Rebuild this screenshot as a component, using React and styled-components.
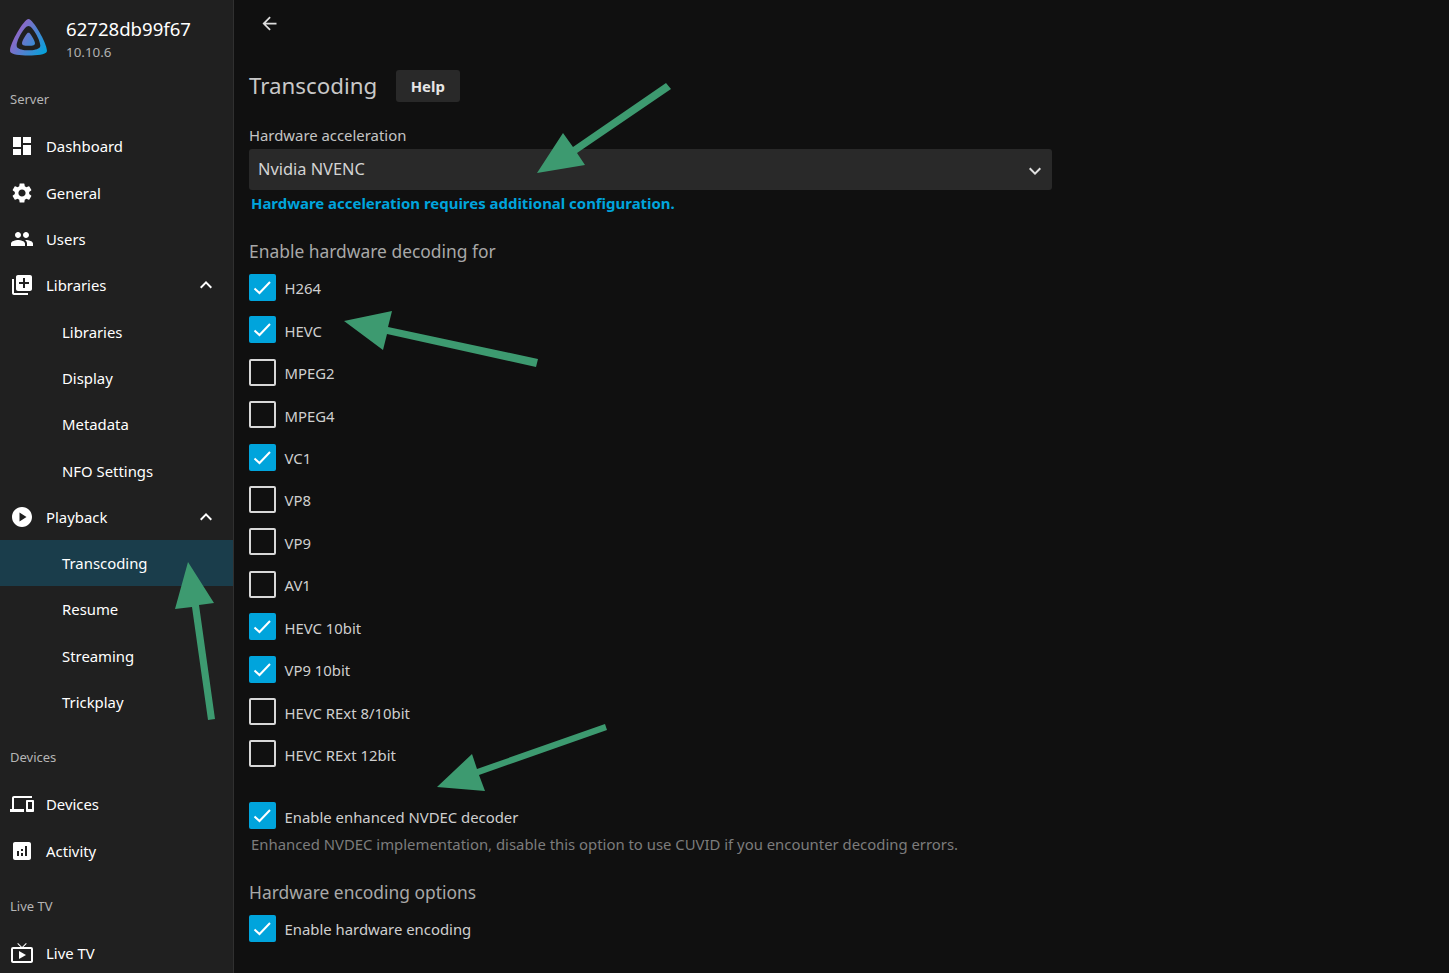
import styled, { createGlobalStyle } from 'styled-components'
import {
  MdDashboard, MdSettings, MdPeople, MdLibraryAdd, MdExpandLess, MdPlayCircle,
  MdDevices, MdAnalytics, MdLiveTv, MdArrowBack, MdKeyboardArrowDown
} from 'react-icons/md'

const Global = createGlobalStyle`
  html, body { margin: 0; height: 100%; background: #101010; overflow: hidden; }
  body { font-family: "Noto Sans", sans-serif; color: #fff; }
  * { box-sizing: border-box; }
`

const Page = styled.div`
  position: relative;
  display: flex;
  width: 1449px;
  height: 973px;
  overflow: hidden;
`

const Sidebar = styled.aside`
  flex: 0 0 234px;
  height: 973px;
  overflow: hidden;
  background: #202020;
  border-right: 1px solid #303030;
`

const Brand = styled.div`
  display: flex;
  align-items: flex-start;
  height: 76px;
  padding: 17px 0 0 10px;
  gap: 19px;
`

const LogoMark = styled.svg`
  margin-top: 1px;
`

const BrandText = styled.div`
  display: flex;
  flex-direction: column;
`

const BrandName = styled.div`
  font-size: 18.6px;
  line-height: 24px;
`

const BrandVersion = styled.div`
  font-size: 13.39px;
  line-height: 22px;
  color: #b0b0b0;
`

const SectionLabel = styled.div`
  height: ${p => p.$height}px;
  padding: ${p => p.$top}px 0 0 10px;
  font-size: 13px;
  line-height: 18px;
  color: #b5b5b5;
`

const NavItem = styled.div`
  display: flex;
  align-items: center;
  height: 46.3px;
  padding-left: ${p => (p.$sub ? 62 : 10)}px;
  padding-right: 15px;
  font-size: 14.88px;
  background: ${p => (p.$active ? '#1a3d4b' : 'transparent')};
`

const NavIcon = styled.span`
  display: flex;
  flex: 0 0 ${p => (p.$small ? 24 : 36)}px;
  font-size: 24px;
`

const NavLabel = styled.span`
  flex: 1;
`

const Main = styled.main`
  flex: 1;
  padding: 0 0 0 15px;
`

const BackButton = styled.div`
  display: flex;
  align-items: center;
  height: 46px;
  padding-left: 10px;
  font-size: 21px;
  color: #ddd;
`

const TitleRow = styled.div`
  display: flex;
  align-items: center;
  height: 32px;
  margin-top: 24px;
  gap: 19px;
`

const Title = styled.h1`
  margin: 0;
  padding-bottom: 2px;
  font-size: 22.32px;
  font-weight: 400;
  color: #c8c8c8;
`

const HelpButton = styled.div`
  display: flex;
  align-items: center;
  justify-content: center;
  width: 64px;
  height: 32px;
  padding-right: 1px;
  border-radius: 3px;
  background: #292929;
  font-size: 14.88px;
  font-weight: 700;
  color: #e6e6e6;
`

const Form = styled.div`
  width: 803px;
`

const FieldLabel = styled.div`
  margin-top: 23px;
  height: 24px;
  font-size: 14.88px;
  line-height: 20px;
  color: #c4c4c4;
`

const Select = styled.div`
  display: flex;
  align-items: center;
  justify-content: space-between;
  height: 41px;
  padding: 0 5px 2px 9px;
  border-radius: 3px;
  background: #292929;
  font-size: 16.37px;
  color: #d4d4d4;
`

const Chevron = styled.span`
  display: flex;
  font-size: 24px;
  margin-top: 4px;
  color: #e0e0e0;
`

const Hint = styled.div`
  padding-left: 2px;
  margin-top: ${p => p.$top}px;
  font-size: ${p => (p.$link ? 14.95 : 14.88)}px;
  line-height: 20px;
  font-weight: ${p => (p.$link ? 700 : 400)};
  color: ${p => (p.$link ? '#00a4dc' : '#7c7c7c')};
`

const Heading = styled.h2`
  margin: ${p => p.$top}px 0 0;
  font-size: 17.41px;
  line-height: 24px;
  font-weight: 400;
  color: #a8a8a8;
`

const CheckRow = styled.div`
  display: flex;
  align-items: center;
  height: 42.42px;
  margin-top: ${p => p.$top || 0}px;
  gap: 8.5px;
  font-size: 14.88px;
  color: #cfcfcf;
`

const Box = styled.span`
  display: flex;
  flex: 0 0 27px;
  width: 27px;
  height: 27px;
  border-radius: 2px;
  border: ${p => (p.$on ? 'none' : '2px solid #d8d8d8')};
  background: ${p => (p.$on ? '#00a4dc' : 'transparent')};
`

const CheckLabel = styled.span`
  padding-top: 2px;
`

const Annotations = styled.svg`
  position: absolute;
  top: 0;
  left: 0;
  pointer-events: none;
`

const Tick = () => (
  <svg width="27" height="27" viewBox="0 0 27 27">
    <path d="M5.5 14.5l5 4.5L21 8" fill="none" stroke="#fff" strokeWidth="2" />
  </svg>
)

const Logo = () => (
  <LogoMark width="37" height="38" viewBox="0 0 24 24" preserveAspectRatio="none">
    <defs>
      <linearGradient id="jf" x1="0" y1="0.3" x2="1" y2="0.9">
        <stop offset="0" stopColor="#aa5cc3" />
        <stop offset="1" stopColor="#00a4dc" />
      </linearGradient>
    </defs>
    <path
      fill="url(#jf)"
      fillRule="evenodd"
      d="M12 .6C8.8.6-1.4 18.4.2 21.4c1.5 3 22 3 23.6 0C25.4 18.4 15.2.6 12 .6zm7.4 17.8c-2 2.6-12.8 2.6-14.8 0C3 16.2 9 5 12 5s9 11.2 7.4 13.4zM12 9.2c-1 0-4.2 5.2-4.2 6.7 0 .6.4 1 .9 1.3 1 .5 5.6.5 6.6 0 .5-.3.9-.7.9-1.3 0-1.5-3.2-6.7-4.2-6.7z"
    />
  </LogoMark>
)

const serverNav = [
  { label: 'Dashboard', icon: <MdDashboard /> },
  { label: 'General', icon: <MdSettings /> },
  { label: 'Users', icon: <MdPeople /> },
  { label: 'Libraries', icon: <MdLibraryAdd />, open: true },
  { label: 'Libraries', sub: true },
  { label: 'Display', sub: true },
  { label: 'Metadata', sub: true },
  { label: 'NFO Settings', sub: true },
  { label: 'Playback', icon: <MdPlayCircle />, open: true },
  { label: 'Transcoding', sub: true, active: true },
  { label: 'Resume', sub: true },
  { label: 'Streaming', sub: true },
  { label: 'Trickplay', sub: true },
]

const codecs = [
  ['H264', true], ['HEVC', true], ['MPEG2', false], ['MPEG4', false],
  ['VC1', true], ['VP8', false], ['VP9', false], ['AV1', false],
  ['HEVC 10bit', true], ['VP9 10bit', true], ['HEVC RExt 8/10bit', false], ['HEVC RExt 12bit', false],
]

const arrows = [
  '666,83 671,89 577,153 585,165 537,173 563,133 573,147',
  '344,321 392,311 388,327 538,359 536,367 387,334 383,350',
  '188,562 214,603 199,605 215,719 208,720 192,607 175,609',
  '605,724 607,730 479,775 485,791 437,787 472,754 477,769',
]

const Nav = ({ item }) => (
  <NavItem $sub={item.sub} $active={item.active}>
    {item.icon && <NavIcon>{item.icon}</NavIcon>}
    <NavLabel>{item.label}</NavLabel>
    {item.open && <NavIcon $small><MdExpandLess /></NavIcon>}
  </NavItem>
)

const Check = ({ label, on, top }) => (
  <CheckRow $top={top}>
    <Box $on={on}>{on && <Tick />}</Box>
    <CheckLabel>{label}</CheckLabel>
  </CheckRow>
)

export default function App() {
  return (
    <Page>
      <Global />
      <Sidebar>
        <Brand>
          <Logo />
          <BrandText>
            <BrandName>62728db99f67</BrandName>
            <BrandVersion>10.10.6</BrandVersion>
          </BrandText>
        </Brand>
        <SectionLabel $height={47.35} $top={14}>Server</SectionLabel>
        {serverNav.map((item, i) => <Nav key={i} item={item} />)}
        <SectionLabel $height={56.04} $top={22.75}>Devices</SectionLabel>
        <Nav item={{ label: 'Devices', icon: <MdDevices /> }} />
        <Nav item={{ label: 'Activity', icon: <MdAnalytics /> }} />
        <SectionLabel $height={56.1} $top={23}>Live TV</SectionLabel>
        <Nav item={{ label: 'Live TV', icon: <MdLiveTv /> }} />
      </Sidebar>
      <Main>
        <BackButton><MdArrowBack /></BackButton>
        <TitleRow>
          <Title>Transcoding</Title>
          <HelpButton>Help</HelpButton>
        </TitleRow>
        <Form>
          <FieldLabel>Hardware acceleration</FieldLabel>
          <Select>
            Nvidia NVENC
            <Chevron><MdKeyboardArrowDown /></Chevron>
          </Select>
          <Hint $link $top={3}>Hardware acceleration requires additional configuration.</Hint>
          <Heading $top={26}>Enable hardware decoding for</Heading>
          {codecs.map(([label, on], i) => <Check key={label} label={label} on={on} top={i === 0 ? 3.25 : 0} />)}
          <Check label="Enable enhanced NVDEC decoder" on top={19.25} />
          <Hint $top={-3}>Enhanced NVDEC implementation, disable this option to use CUVID if you encounter decoding errors.</Hint>
          <Heading $top={26}>Hardware encoding options</Heading>
          <Check label="Enable hardware encoding" on top={3.5} />
        </Form>
      </Main>
      <Annotations width="1449" height="973">
        {arrows.map(points => <polygon key={points} points={points} fill="#3d9a70" />)}
      </Annotations>
    </Page>
  )
}
